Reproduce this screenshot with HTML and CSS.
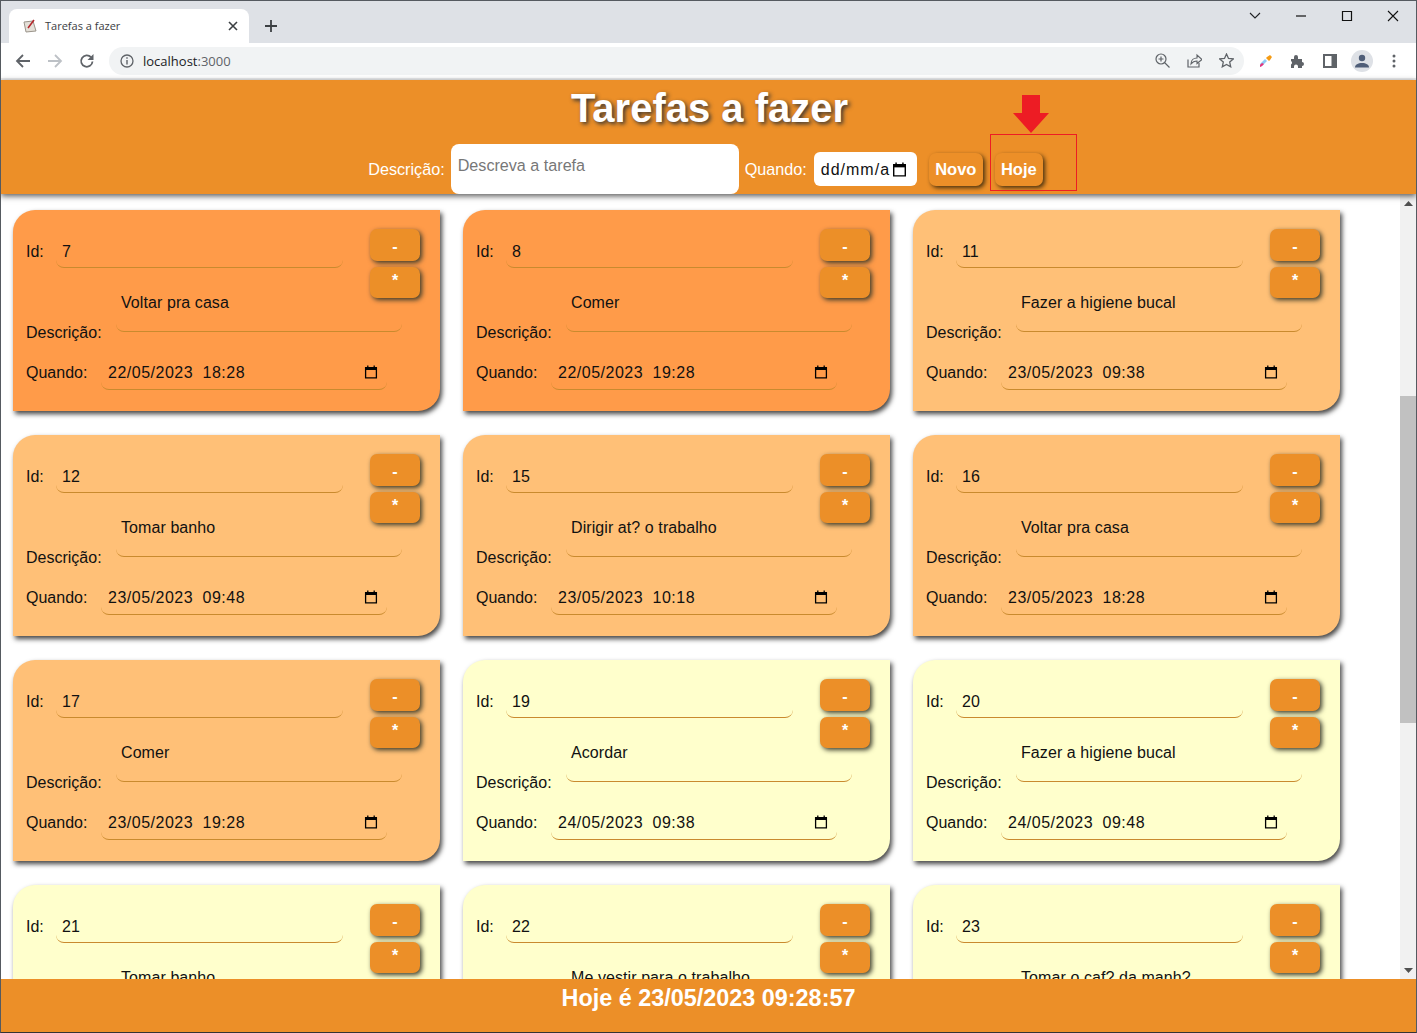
FILE: index.html
```html
<!DOCTYPE html>
<html lang="pt-BR">
<head>
  <meta charset="UTF-8">
  <title>Tarefas a fazer</title>
  <link rel="stylesheet" href="styles.css">
</head>
<body>
  <svg class="sprites" width="0" height="0">
    <symbol id="cal" viewBox="0 0 14 14">
      <path d="M1.600 2.600h10.800v10.300H1.600zM3.800 .5v2M10.200 .5v2" fill="none" stroke="#000" stroke-width="1.300"/>
      <path d="M1.600 2.500h10.800v2.500H1.600z"/>
    </symbol>
  </svg>
  <div class="window">
    <div class="tabstrip">
      <div class="tab">
        <svg class="favicon" width="16" height="16" viewBox="0 0 16 16">
          <path d="M2 4l9-1 3 10-10 1z" fill="#e4e0d8" stroke="#9a948a"/>
          <path d="M6 10l6-8" stroke="#b3262a" stroke-width="1.500"/>
        </svg>
        <span class="tab-title">Tarefas a fazer</span>
        <svg class="tab-close" width="10" height="10" viewBox="0 0 10 10"><path d="M1 1l8 8M9 1l-8 8" stroke="#3c4043" stroke-width="1.600"/></svg>
      </div>
      <svg class="new-tab" width="12" height="12" viewBox="0 0 12 12"><path d="M6 0v12M0 6h12" stroke="#3c4043" stroke-width="1.800"/></svg>
      <div class="win-controls">
        <svg width="12" height="8" viewBox="0 0 12 8"><path d="M1 1l5 5 5-5" fill="none" stroke="#202124" stroke-width="1.100"/></svg>
        <svg width="12" height="12" viewBox="0 0 12 12"><path d="M1 6h10" stroke="#111" stroke-width="1.200"/></svg>
        <svg width="12" height="12" viewBox="0 0 12 12"><path d="M1.500 1.500h9v9h-9z" fill="none" stroke="#111" stroke-width="1.200"/></svg>
        <svg width="12" height="12" viewBox="0 0 12 12"><path d="M1 1l10 10M11 1L1 11" stroke="#111" stroke-width="1.100"/></svg>
      </div>
    </div>
    <div class="toolbar">
      <svg class="nav" width="16" height="16" viewBox="0 0 16 16"><path d="M15 8H2M8 2L2 8l6 6" fill="none" stroke="#5f6368" stroke-width="1.800"/></svg>
      <svg class="nav" width="16" height="16" viewBox="0 0 16 16"><path d="M1 8h13M8 2l6 6-6 6" fill="none" stroke="#bdc1c6" stroke-width="1.800"/></svg>
      <svg class="nav" width="16" height="16" viewBox="0 0 16 16"><path d="M13.500 8.500A5.700 5.700 0 1 1 12 4.200" fill="none" stroke="#5f6368" stroke-width="1.800"/><path d="M14.500 1v6h-6z" fill="#5f6368"/></svg>
      <div class="omnibox">
        <svg width="14" height="14" viewBox="0 0 14 14"><circle cx="7" cy="7" r="6" fill="none" stroke="#5f6368" stroke-width="1.300"/><path d="M7 6v4.500M7 3.300v1.500" stroke="#5f6368" stroke-width="1.400"/></svg>
        <span class="url">localhost<span class="port">:3000</span></span>
        <div class="omni-actions">
          <svg width="15" height="15" viewBox="0 0 15 15"><circle cx="6" cy="6" r="5" fill="none" stroke="#5f6368" stroke-width="1.200"/><path d="M9.500 9.500l5 5M3.500 6h5M6 3.500v5" stroke="#5f6368" stroke-width="1.200"/></svg>
          <svg width="15" height="15" viewBox="0 0 15 15"><path d="M1 6.500v7.500h11v-4" fill="none" stroke="#5f6368" stroke-width="1.200"/><path d="M4 11c0-4 3-6 6-6V2l5 4.500-5 4V8c-2.500 0-4.500 1-6 3z" fill="none" stroke="#5f6368" stroke-width="1.100"/></svg>
          <svg width="15" height="15" viewBox="0 0 15 15"><path d="M7.500 1l2 4.400 4.800.5-3.600 3.200 1 4.700-4.200-2.400-4.200 2.400 1-4.700L.7 5.900l4.800-.5z" fill="none" stroke="#5f6368" stroke-width="1.300"/></svg>
        </div>
      </div>
      <div class="ext-icons">
        <svg width="14" height="14" viewBox="0 0 14 14"><path d="M1 13l2-1 5-5-2-2-5 5z" fill="#8ecbf5"/><path d="M1 13l2-1 2-2-2-1-2 2z" fill="#e8327c"/><path d="M7 4l3 3 1-1 2-3-2-2-3 2z" fill="#f59b14"/></svg>
        <svg width="16" height="16" viewBox="0 0 16 16"><path d="M1 6h3V4a2 2 0 0 1 4 0v2h4v3a2 2 0 0 1 0 4v2H8v-1.500a2 2 0 0 0-4 0V15H1v-3.500a2 2 0 0 0 0-3.500z" fill="#5f6368"/></svg>
        <svg width="14" height="14" viewBox="0 0 14 14"><path d="M0 0h14v14H0z" fill="#5f6368"/><path d="M2 2h6.500v10H2z" fill="#fff"/></svg>
        <div class="avatar">
          <svg width="14" height="14" viewBox="0 0 14 14"><circle cx="7" cy="4" r="3.200" fill="#4f5e78"/><path d="M0 13.500c0-3 3-4.500 7-4.500s7 1.500 7 4.500z" fill="#4f5e78"/></svg>
        </div>
        <svg width="4" height="14" viewBox="0 0 4 14"><circle cx="2" cy="2" r="1.500" fill="#5f6368"/><circle cx="2" cy="7" r="1.500" fill="#5f6368"/><circle cx="2" cy="12" r="1.500" fill="#5f6368"/></svg>
      </div>
    </div>

    <header class="page-header">
      <h1>Tarefas a fazer</h1>
      <form class="new-task">
        <label>Descrição:</label>
        <input class="desc-input" type="text" placeholder="Descreva a tarefa">
        <label>Quando:</label>
        <div class="date-input"><span>dd/mm/a</span><svg width="15" height="15"><use href="#cal"/></svg></div>
        <button class="btn" type="button">Novo</button>
        <button class="btn" type="button">Hoje</button>
      </form>
      <div class="highlight-box"></div>
      <svg class="highlight-arrow" width="36" height="38" viewBox="0 0 36 38"><path d="M9 0h18v18h9L18 38 0 18h9z" fill="#ed1c24"/></svg>
    </header>

    <div class="page-body">
      <main class="cards">
        <div class="card overdue">
          <div class="row"><span class="lbl lbl-id">Id:</span><div class="field">7</div></div>
          <div class="actions"><button class="btn-small">-</button><button class="btn-small">*</button></div>
          <div class="row row-desc"><span class="lbl lbl-desc">Descrição:</span><div class="field">Voltar pra casa</div></div>
          <div class="row row-when"><span class="lbl lbl-when">Quando:</span><div class="field field-date">22/05/2023 18:28<svg width="14" height="14"><use href="#cal"/></svg></div></div>
        </div>
        <div class="card overdue">
          <div class="row"><span class="lbl lbl-id">Id:</span><div class="field">8</div></div>
          <div class="actions"><button class="btn-small">-</button><button class="btn-small">*</button></div>
          <div class="row row-desc"><span class="lbl lbl-desc">Descrição:</span><div class="field">Comer</div></div>
          <div class="row row-when"><span class="lbl lbl-when">Quando:</span><div class="field field-date">22/05/2023 19:28<svg width="14" height="14"><use href="#cal"/></svg></div></div>
        </div>
        <div class="card today">
          <div class="row"><span class="lbl lbl-id">Id:</span><div class="field">11</div></div>
          <div class="actions"><button class="btn-small">-</button><button class="btn-small">*</button></div>
          <div class="row row-desc"><span class="lbl lbl-desc">Descrição:</span><div class="field">Fazer a higiene bucal</div></div>
          <div class="row row-when"><span class="lbl lbl-when">Quando:</span><div class="field field-date">23/05/2023 09:38<svg width="14" height="14"><use href="#cal"/></svg></div></div>
        </div>
        <div class="card today">
          <div class="row"><span class="lbl lbl-id">Id:</span><div class="field">12</div></div>
          <div class="actions"><button class="btn-small">-</button><button class="btn-small">*</button></div>
          <div class="row row-desc"><span class="lbl lbl-desc">Descrição:</span><div class="field">Tomar banho</div></div>
          <div class="row row-when"><span class="lbl lbl-when">Quando:</span><div class="field field-date">23/05/2023 09:48<svg width="14" height="14"><use href="#cal"/></svg></div></div>
        </div>
        <div class="card today">
          <div class="row"><span class="lbl lbl-id">Id:</span><div class="field">15</div></div>
          <div class="actions"><button class="btn-small">-</button><button class="btn-small">*</button></div>
          <div class="row row-desc"><span class="lbl lbl-desc">Descrição:</span><div class="field">Dirigir at? o trabalho</div></div>
          <div class="row row-when"><span class="lbl lbl-when">Quando:</span><div class="field field-date">23/05/2023 10:18<svg width="14" height="14"><use href="#cal"/></svg></div></div>
        </div>
        <div class="card today">
          <div class="row"><span class="lbl lbl-id">Id:</span><div class="field">16</div></div>
          <div class="actions"><button class="btn-small">-</button><button class="btn-small">*</button></div>
          <div class="row row-desc"><span class="lbl lbl-desc">Descrição:</span><div class="field">Voltar pra casa</div></div>
          <div class="row row-when"><span class="lbl lbl-when">Quando:</span><div class="field field-date">23/05/2023 18:28<svg width="14" height="14"><use href="#cal"/></svg></div></div>
        </div>
        <div class="card today">
          <div class="row"><span class="lbl lbl-id">Id:</span><div class="field">17</div></div>
          <div class="actions"><button class="btn-small">-</button><button class="btn-small">*</button></div>
          <div class="row row-desc"><span class="lbl lbl-desc">Descrição:</span><div class="field">Comer</div></div>
          <div class="row row-when"><span class="lbl lbl-when">Quando:</span><div class="field field-date">23/05/2023 19:28<svg width="14" height="14"><use href="#cal"/></svg></div></div>
        </div>
        <div class="card later">
          <div class="row"><span class="lbl lbl-id">Id:</span><div class="field">19</div></div>
          <div class="actions"><button class="btn-small">-</button><button class="btn-small">*</button></div>
          <div class="row row-desc"><span class="lbl lbl-desc">Descrição:</span><div class="field">Acordar</div></div>
          <div class="row row-when"><span class="lbl lbl-when">Quando:</span><div class="field field-date">24/05/2023 09:38<svg width="14" height="14"><use href="#cal"/></svg></div></div>
        </div>
        <div class="card later">
          <div class="row"><span class="lbl lbl-id">Id:</span><div class="field">20</div></div>
          <div class="actions"><button class="btn-small">-</button><button class="btn-small">*</button></div>
          <div class="row row-desc"><span class="lbl lbl-desc">Descrição:</span><div class="field">Fazer a higiene bucal</div></div>
          <div class="row row-when"><span class="lbl lbl-when">Quando:</span><div class="field field-date">24/05/2023 09:48<svg width="14" height="14"><use href="#cal"/></svg></div></div>
        </div>
        <div class="card later">
          <div class="row"><span class="lbl lbl-id">Id:</span><div class="field">21</div></div>
          <div class="actions"><button class="btn-small">-</button><button class="btn-small">*</button></div>
          <div class="row row-desc"><span class="lbl lbl-desc">Descrição:</span><div class="field">Tomar banho</div></div>
        </div>
        <div class="card later">
          <div class="row"><span class="lbl lbl-id">Id:</span><div class="field">22</div></div>
          <div class="actions"><button class="btn-small">-</button><button class="btn-small">*</button></div>
          <div class="row row-desc"><span class="lbl lbl-desc">Descrição:</span><div class="field">Me vestir para o trabalho</div></div>
        </div>
        <div class="card later">
          <div class="row"><span class="lbl lbl-id">Id:</span><div class="field">23</div></div>
          <div class="actions"><button class="btn-small">-</button><button class="btn-small">*</button></div>
          <div class="row row-desc"><span class="lbl lbl-desc">Descrição:</span><div class="field">Tomar o caf? da manh?</div></div>
        </div>
      </main>
      <div class="scrollbar">
        <svg width="9" height="5" viewBox="0 0 9 5"><path d="M4.500 0L9 5H0z" fill="#505050"/></svg>
        <div class="thumb"></div>
        <svg class="arrow-down" width="9" height="5" viewBox="0 0 9 5"><path d="M0 0h9L4.500 5z" fill="#505050"/></svg>
      </div>
    </div>

    <footer class="page-footer">Hoje é 23/05/2023 09:28:57</footer>
  </div>
</body>
</html>
```

FILE: styles.css
```css
* {
  box-sizing: border-box;
}

body {
  margin: 0;
  overflow: hidden;
  font-family: "Liberation Sans", Arial, sans-serif;
  font-size: 16px;
  color: #111;
  background: white;
}

.sprites {
  position: absolute;
}

.window {
  width: 1417px;
  height: 1033px;
  display: flex;
  flex-direction: column;
  border: 1px solid #555a60;
  border-bottom-color: #333;
  overflow: hidden;
}

/* browser chrome */
.tabstrip {
  height: 42px;
  flex: none;
  display: flex;
  align-items: flex-end;
  background: #dee1e6;
  padding-left: 8px;
}

.tab {
  width: 240px;
  height: 34px;
  display: flex;
  align-items: center;
  padding: 0 11px 1px 13px;
  background: white;
  border-radius: 8px 8px 0 0;
}

.favicon {
  margin-right: 7px;
}

.tab-title {
  flex: 1;
  font-family: "Open Sans", sans-serif;
  font-size: 11px;
  color: #3c4043;
}

.new-tab {
  margin: 0 0 11px 16px;
}

.win-controls {
  margin: 0 17px 0 auto;
  align-self: flex-start;
  display: flex;
  align-items: center;
  gap: 34px;
  height: 30px;
}

.toolbar {
  height: 37px;
  flex: none;
  display: flex;
  align-items: center;
  padding: 0 14px;
  background: white;
  border-bottom: 2px solid #ecedef;
}

.nav {
  margin-right: 16px;
}

.omnibox {
  width: 1135px;
  height: 28px;
  margin-left: -2px;
  display: flex;
  align-items: center;
  gap: 9px;
  padding: 0 10px 0 11px;
  background: #f1f3f4;
  border-radius: 14px;
}

.url {
  font-family: "Open Sans", sans-serif;
  font-size: 13px;
  color: #202124;
}

.port {
  color: #5f6368;
}

.omni-actions {
  margin-left: auto;
  display: flex;
  gap: 17px;
}

.ext-icons {
  display: flex;
  align-items: center;
  margin-left: 15px;
  gap: 17px;
}

.avatar {
  width: 22px;
  height: 22px;
  display: flex;
  align-items: center;
  justify-content: center;
  border-radius: 50%;
  background: #dee1e6;
  margin: 0 2px 0 -3px;
}

/* page header */
.page-header {
  height: 114px;
  flex: none;
  position: relative;
  z-index: 2;
  display: flex;
  flex-direction: column;
  align-items: center;
  background: #ec8f28;
  box-shadow: 0 2px 6px #555;
}

.page-header h1 {
  margin: 5px 0 0;
  padding-left: 2px;
  height: 59px;
  font-size: 40px;
  line-height: 46px;
  color: white;
  text-shadow: 2px 2px 4px #333;
}

.new-task {
  width: 100%;
  display: flex;
  align-items: center;
  justify-content: center;
  padding-right: 6px;
  height: 50px;
  color: white;
}

.new-task label {
  padding-top: 1px;
  font-size: 16.200px;
}

.desc-input {
  width: 288px;
  height: 50px;
  margin: 0 6px;
  padding: 0 7px 7px;
  border: none;
  border-radius: 8px;
  background: white;
  font-family: inherit;
  font-size: 16.150px;
}

.desc-input::placeholder {
  color: #777;
}

.date-input {
  width: 103px;
  height: 34px;
  margin: 0 12px 0 7px;
  padding: 1px 10px 0 7px;
  display: flex;
  align-items: center;
  justify-content: space-between;
  background: white;
  color: #111;
  border-radius: 6px;
  letter-spacing: 1px;
}

.btn {
  width: 54px;
  height: 33px;
  margin-right: 12px;
  padding: 1px 0 0;
  border: none;
  border-radius: 7px;
  background: #ec8f28;
  color: white;
  font-family: inherit;
  font-size: 16.500px;
  font-weight: bold;
  box-shadow: 2px 2px 4px #4a3210;
}

.btn:last-child {
  width: 48px;
  margin-right: 0;
}

.highlight-box {
  position: absolute;
  left: 989px;
  top: 54px;
  width: 87px;
  height: 57px;
  border: 1px solid #ed1c24;
}

.highlight-arrow {
  position: absolute;
  left: 1012px;
  top: 15px;
}

/* cards area */
.page-body {
  flex: 1;
  min-height: 0;
  display: flex;
  overflow: hidden;
}

.cards {
  flex: 1;
  display: grid;
  grid-template-columns: repeat(3, 427px);
  grid-auto-rows: 201px;
  column-gap: 23px;
  row-gap: 24px;
  padding: 16px 0 0 12px;
  overflow: hidden;
}

.card {
  display: grid;
  grid-template-columns: 1fr 50px;
  align-content: start;
  padding: 19px 20px 21px 13px;
  border-radius: 22px 0 22px 0;
  box-shadow: 2px 3px 5px #444;
}

.overdue {
  background: #ff9b49;
}

.today {
  background: #ffc077;
}

.later {
  background: #ffffcc;
}

.row {
  display: flex;
  align-items: flex-end;
  height: 39px;
  grid-column: 1;
  grid-row: 1;
}

.row-desc {
  height: 73px;
  grid-column: 1 / -1;
  grid-row: 2;
}

.row-when {
  height: 49px;
  grid-column: 1 / -1;
  grid-row: 3;
}

.actions {
  grid-column: 2;
  grid-row: 1 / span 2;
  display: flex;
  flex-direction: column;
  gap: 6px;
}

.btn-small {
  width: 50px;
  height: 32px;
  padding: 3px 0 0;
  border: none;
  border-radius: 7px;
  background: #ec8f28;
  color: white;
  font-family: inherit;
  font-size: 16px;
  font-weight: bold;
  box-shadow: 2px 2px 5px #3a3a2a;
}

.btn-small:last-child {
  height: 31px;
  padding: 0 0 4px;
}

.lbl {
  flex: none;
  height: 18px;
  line-height: 18px;
  margin-bottom: 7px;
}

.lbl-id {
  width: 30px;
}

.lbl-desc {
  width: 90px;
}

.lbl-when {
  width: 75px;
  margin-bottom: 8px;
}

.field {
  width: 287px;
  padding: 0 6px 6px;
  line-height: 18px;
  border-bottom: 1px solid #c98a2e;
  border-radius: 8px;
  letter-spacing: .08px;
}

.row-desc .lbl {
  margin-bottom: -1px;
}

.row-desc .field {
  width: 286px;
  margin-bottom: 9px;
  padding: 26px 5px 19px;
}

.field-date {
  width: 286px;
  display: flex;
  align-items: center;
  justify-content: space-between;
  padding: 0 9px 7px 7px;
  letter-spacing: .5px;
  word-spacing: 4.500px;
}

.field-date svg {
  margin-bottom: 2px;
}

/* fake scrollbar */
.scrollbar {
  width: 16px;
  flex: none;
  display: flex;
  flex-direction: column;
  align-items: center;
  padding: 7px 0 6px;
  background: #f1f1f1;
}

.thumb {
  align-self: stretch;
  height: 327px;
  margin-top: 190px;
  background: #c1c1c1;
}

.arrow-down {
  margin-top: auto;
}

.page-footer {
  height: 53px;
  flex: none;
  position: relative;
  z-index: 2;
  padding-top: 4px;
  text-align: center;
  background: #ec8f28;
  color: white;
  font-size: 23.400px;
  font-weight: bold;
  line-height: 30px;
}
```
